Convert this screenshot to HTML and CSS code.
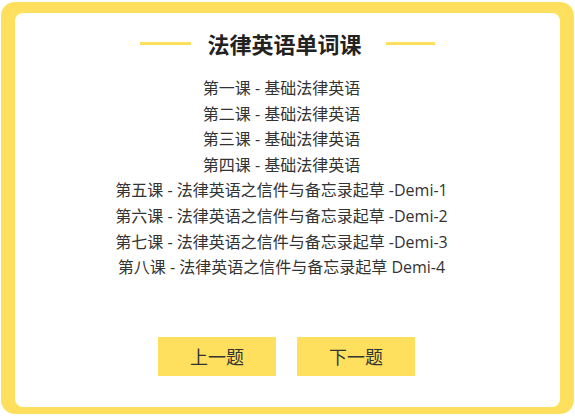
FILE: index.html
```html
<!DOCTYPE html>
<html lang="zh-CN">
<head>
<meta charset="utf-8">
<title>法律英语单词课</title>
<link rel="stylesheet" href="styles.css">
</head>
<body>
<div class="frame">
  <div class="card">
    <div class="title-row">
      <span class="bar bar-left"></span>
      <h1 class="title">法律英语单词课</h1>
      <span class="bar bar-right"></span>
    </div>
    <ul class="lessons">
      <li>第一课 - 基础法律英语</li>
      <li>第二课 - 基础法律英语</li>
      <li>第三课 - 基础法律英语</li>
      <li>第四课 - 基础法律英语</li>
      <li>第五课 - 法律英语之信件与备忘录起草 -Demi-1</li>
      <li>第六课 - 法律英语之信件与备忘录起草 -Demi-2</li>
      <li>第七课 - 法律英语之信件与备忘录起草 -Demi-3</li>
      <li>第八课 - 法律英语之信件与备忘录起草 Demi-4</li>
    </ul>
    <div class="actions">
      <button class="btn">上一题</button>
      <button class="btn">下一题</button>
    </div>
  </div>
</div>
</body>
</html>
```
FILE: styles.css
```css
html, body {
  margin: 0;
  padding: 0;
  background: #ffffff;
}
body {
  font-family: "Open Sans", "Noto Sans CJK SC", sans-serif;
  color: #333333;
}
.frame {
  box-sizing: border-box;
  margin: 2px 1px 0;
  height: 412px;
  background: #ffe05e;
  border-radius: 14px;
  padding: 11px 14px 7px;
}
.card {
  box-sizing: border-box;
  height: 100%;
  background: #ffffff;
  border-radius: 8px;
  padding: 15px 0 0;
  display: flex;
  flex-direction: column;
  align-items: center;
}
.title-row {
  display: flex;
  align-items: center;
  justify-content: center;
  height: 30px;
}
.bar {
  height: 3px;
  background: #ffe05e;
}
.bar-left {
  width: 51px;
}
.bar-right {
  width: 49px;
}
.title {
  margin: 0 24px 0 16px;
  font-size: 22px;
  font-weight: 700;
  line-height: 30px;
  color: #222222;
  font-family: "Noto Sans CJK SC", sans-serif;
}
.lessons {
  list-style: none;
  margin: 18px 0 0;
  padding: 0 12px 0 0;
  text-align: center;
  font-size: 16px;
  line-height: 25.6px;
  color: #333333;
}
.actions {
  display: flex;
  gap: 21px;
  margin-top: 56px;
  padding-right: 2px;
}
.btn {
  width: 118px;
  height: 39px;
  border: 0;
  padding: 0;
  background: #ffe05e;
  font-family: "Noto Sans CJK SC", sans-serif;
  font-size: 18px;
  color: #333333;
}
```
